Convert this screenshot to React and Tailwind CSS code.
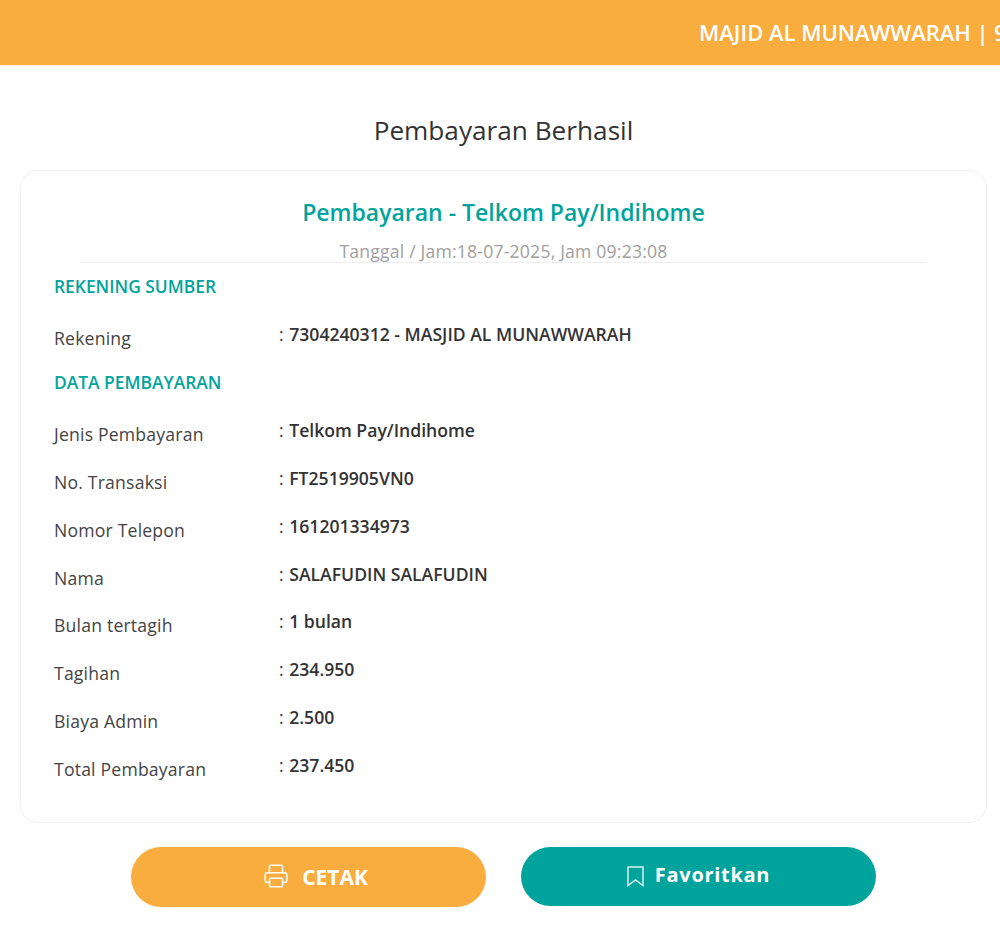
import { Printer } from "lucide-react";

const rows = [
  ["Jenis Pembayaran", "Telkom Pay/Indihome"],
  ["No. Transaksi", "FT2519905VN0"],
  ["Nomor Telepon", "161201334973"],
  ["Nama", "SALAFUDIN SALAFUDIN"],
  ["Bulan tertagih", "1 bulan"],
  ["Tagihan", "234.950"],
  ["Biaya Admin", "2.500"],
  ["Total Pembayaran", "237.450"],
];

function Row({ label, value }) {
  return (
    <div className="flex h-[47.9px] items-start text-[17.6px] leading-[24px]">
      <div className="w-[225px] pt-1 tracking-[0.2px] text-[#444]">{label}</div>
      <div className="font-semibold text-[#333]">
        <span className="mr-px font-normal">:</span> {value}
      </div>
    </div>
  );
}

export default function App() {
  return (
    <div className="min-h-[933px] bg-white font-['Open_Sans','Noto_Sans',sans-serif]">
      <div className="h-[66px] overflow-hidden border-b border-[#fdeed8] bg-[#faad3f] pl-[699px] pt-[18px]">
        <div className="whitespace-nowrap text-[22px] leading-7 font-semibold text-white">MAJID AL MUNAWWARAH | 9</div>
      </div>
      <h1 className="pt-[47px] pl-[7px] text-center text-[26.2px] leading-[34px] text-[#333]">Pembayaran Berhasil</h1>
      <div className="mx-5 mt-[23px] h-[653px] w-[967px] rounded-[18px] border border-[#eef1f1] px-[33px] pt-[24px]">
        <div className="text-center text-[23px] leading-[34px] font-semibold text-[#00a49c]">Pembayaran - Telkom Pay/Indihome</div>
        <div className="mx-[26px] mt-[10px] h-[24px] border-b border-[#eeeeee] text-center text-[17.6px] leading-[24px] tracking-[0.2px] text-[#a0a0a0]">
          Tanggal / Jam:18-07-2025, Jam 09:23:08
        </div>
        <div className="mt-[11px] h-12 text-[17.4px] leading-[24px] font-semibold text-[#00a49c]">REKENING SUMBER</div>
        <Row label="Rekening" value="7304240312 - MASJID AL MUNAWWARAH" />
        <div className="h-12 text-[17.4px] leading-[24px] font-semibold text-[#00a49c]">DATA PEMBAYARAN</div>
        {rows.map((r) => (
          <Row key={r[0]} label={r[0]} value={r[1]} />
        ))}
      </div>
      <div className="mt-[24px] flex justify-center gap-[35px] pl-[7px]">
        <button className="flex h-[60px] w-[355px] items-center justify-center gap-[13px] rounded-[30px] bg-[#faad3f] pl-[14px] text-[21px] font-bold text-white">
          <Printer size={26} strokeWidth={1.4} className="mb-[3px]" />
          <span className="pt-[2px]">CETAK</span>
        </button>
        <button className="flex h-[59px] w-[355px] items-center justify-center gap-[11px] rounded-[30px] bg-[#00a49c] text-xl font-bold tracking-[0.7px] text-white">
          <svg width="17" height="21" viewBox="0 0 17 21" fill="none" stroke="currentColor" strokeOpacity="0.85" strokeWidth="1.5">
            <path d="M1 1h15v18.5l-7.5-5.5-7.5 5.5z" />
          </svg>
          <span className="pb-1">Favoritkan</span>
        </button>
      </div>
    </div>
  );
}
